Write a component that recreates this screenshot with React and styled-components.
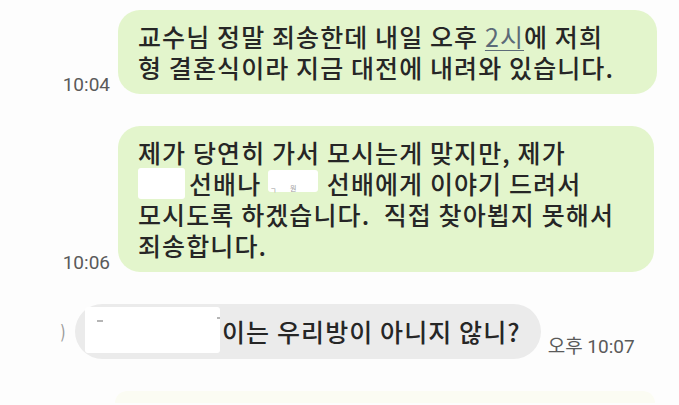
import React from "react";
import styled, { createGlobalStyle } from "styled-components";

const Global = createGlobalStyle`
  html, body { margin: 0; padding: 0; background: #fdfdfd; }
  body { width: 679px; height: 405px; overflow: hidden; }
`;

const Chat = styled.div`
  display: flex;
  flex-direction: column;
  gap: 32px;
  padding: 10px 0 0 60px;
  font-family: "Noto Sans CJK KR", "Noto Sans", sans-serif;
`;

const Row = styled.div`
  display: flex;
  align-items: flex-end;
`;

const Time = styled.div`
  width: 58px;
  box-sizing: border-box;
  padding: 0 8px 0 0;
  text-align: right;
  font-family: Roboto, "Noto Sans CJK KR", sans-serif;
  font-size: 19px;
  line-height: 18px;
  color: #5a5a5a;
  flex: none;
`;

const SideTime = styled(Time)`
  width: auto;
  padding: 0 0 3px 7px;
  text-align: left;
`;

const Bubble = styled.div`
  position: relative;
  width: ${(p) => p.$w || "auto"};
  box-sizing: border-box;
  padding: ${(p) => p.$pad || "11px 20px"};
  border-radius: ${(p) => p.$r || "22px"};
  background: ${(p) => p.$bg || "#e3f5cc"};
  color: #262626;
  font-size: 25px;
  font-weight: 500;
  line-height: 31px;
  letter-spacing: 1.1px;
  white-space: nowrap;
`;

const Link = styled.span`
  color: #5d6b78;
  font-weight: 400;
  text-decoration: underline;
  text-decoration-thickness: 1px;
  text-underline-offset: 3px;
`;

const Redact = styled.span`
  position: relative;
  display: inline-block;
  width: ${(p) => p.$w}px;
  height: ${(p) => p.$h}px;
  margin: ${(p) => p.$m || "0"};
  vertical-align: top;
  background: #ffffff;
  border-radius: 3px;
`;

const Speck = styled.span`
  position: absolute;
  left: ${(p) => p.$x}px;
  top: ${(p) => p.$y}px;
  font-size: 7px;
  line-height: 7px;
  font-weight: 400;
  color: #9a9a9a;
  letter-spacing: 0;
`;

const Dash = styled.span`
  position: absolute;
  left: ${(p) => p.$x}px;
  top: ${(p) => p.$y}px;
  width: ${(p) => p.$w}px;
  height: 2px;
  background: #b5b5b5;
`;

const Edge = styled.div`
  flex: none;
  width: 15px;
  align-self: center;
  font-family: "DejaVu Sans", sans-serif;
  font-size: 20px;
  line-height: 20px;
  color: #9a9a9a;
  transform: scaleX(0.7);
  transform-origin: left center;
`;

const Faint = styled.div`
  margin-left: 55px;
  width: 540px;
  height: 12px;
  border-radius: 22px 22px 0 0;
  background: #fbfcf3;
`;

export default function App() {
  return (
    <>
      <Global />
      <Chat>
        <Row>
          <Time>10:04</Time>
          <Bubble $w="539px">
            교수님 정말 죄송한데 내일 오후 <Link>2시</Link>에 저희
            <br />
            형 결혼식이라 지금 대전에 내려와 있습니다.
          </Bubble>
        </Row>
        <Row>
          <Time>10:06</Time>
          <Bubble $w="536px">
            제가 당연히 가서 모시는게 맞지만, 제가
            <br />
            <Redact $w={47} $h={31} $m="0 4px 0 0" />선배나{" "}
            <Redact $w={50} $h={22} $m="2px 2px 0 0">
              <Speck $x={2} $y={17}>ㄱ</Speck>
              <Speck $x={22} $y={15}>뭔</Speck>
            </Redact>{" "}
            선배에게 이야기 드려서
            <br />
            모시도록 하겠습니다.{"\u00a0"} 직접 찾아뵙지 못해서
            <br />
            죄송합니다.
          </Bubble>
        </Row>
        <Row>
          <Edge>)</Edge>
          <Bubble $bg="#ebebeb" $r="28px" $pad="12px 20px 12px 10px">
            <Redact $w={135} $h={46} $m="-9px 2px -6px 0">
              <Dash $x={12} $y={13} $w={6} />
              <Dash $x={132} $y={10} $w={3} />
            </Redact>
            이는 우리방이 아니지 않니?
          </Bubble>
          <SideTime>오후 10:07</SideTime>
        </Row>
        <Faint />
      </Chat>
    </>
  );
}
